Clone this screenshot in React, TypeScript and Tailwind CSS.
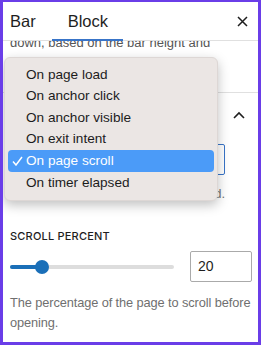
import React from "react";

const items = [
  "On page load",
  "On anchor click",
  "On anchor visible",
  "On exit intent",
  "On page scroll",
  "On timer elapsed",
];

const sans = { fontFamily: "'Liberation Sans', Arial, sans-serif" };

export default function App() {
  return (
    <div
      className="relative w-[261px] h-[345px] overflow-hidden bg-white border-[3px] border-t-2 border-[#6a3de8]"
      style={sans}
    >
      {/* Header */}
      <div className="relative flex items-center h-[39px] border-b border-[#e0e0e0] pl-[7px] pr-[8px]">
        <div className="text-[16.5px] text-[#1e1e1e]">Bar</div>
        <div className="relative ml-[16px] text-[16.5px] text-[#1e1e1e] h-full flex items-center pl-[16px] pr-[15px]">
          Block
          <div className="absolute left-0 right-0 bottom-[-1px] h-[2px] bg-[#3874c8]" />
        </div>
        <div className="ml-auto text-[#1e1e1e] mr-[1px]">
          <svg width="13" height="13" viewBox="0 0 13 13">
            <path d="M2 2 L11 11 M11 2 L2 11" stroke="#1e1e1e" strokeWidth="1.5" />
          </svg>
        </div>
      </div>

      {/* scrolled content */}
      <div className="overflow-hidden">
        <div className="-mt-[8px] pl-[7px] pr-[8px] text-[13px] leading-[20px] text-[#555]">
          <div>down, based on the bar height and</div>
          <div>position.</div>
        </div>
        <div className="mt-[19px] border-t border-[#e0e0e0]" />
        <div className="flex items-center justify-between h-[44px] pl-[7px] pr-[12px]">
          <div className="text-[13px] font-medium text-[#1e1e1e]">Trigger</div>
          <svg width="14" height="10" viewBox="0 0 14 10">
            <path d="M2 8 L7 3 L12 8" stroke="#1e1e1e" strokeWidth="1.6" fill="none" />
          </svg>
        </div>
        <div className="pl-[7px] mt-[7px]">
          <div className="w-[215px] h-[31px] border border-[#3874c8] rounded-[2px]" />
          <div className="mt-[10px] w-[215px] text-[13px] text-[#757575] leading-[18px] text-right">
            When to open the bar and load.
          </div>
        </div>

        <div className="mt-[25px] pl-[7px] pr-[3px]">
          <div
            className="text-[11px] leading-[16px] font-medium uppercase text-[#1e1e1e] tracking-[0.2px]"
            style={{ fontFamily: "Inter, sans-serif" }}
          >
            Scroll percent
          </div>
          <div className="flex items-center mt-[7px] pr-[3px]">
            <div className="relative flex-1 h-[4px] bg-[#ddd] rounded-full mr-[16px]">
              <div className="absolute left-0 top-0 h-[4px] w-[32px] bg-[#1a6fb8] rounded-full" />
              <div className="absolute left-[25px] top-[-5px] w-[14px] h-[14px] rounded-full bg-[#1a6fb8]" />
            </div>
            <div className="w-[62px] h-[31px] border border-[#aaa] rounded-[2px] flex items-center pl-[7px] text-[14px] text-[#1e1e1e]">
              20
            </div>
          </div>
          <div className="mt-[11px] text-[12.8px] leading-[20px] text-[#6f6f6f] tracking-[-0.1px]">
            The percentage of the page to scroll before opening.
          </div>
        </div>
      </div>

      {/* Dropdown menu */}
      <div
        className="absolute left-[1px] top-[55px] w-[214px] bg-[#ebe6e4] rounded-[6px] py-[6px] px-[3px] shadow-[0_4px_12px_rgba(0,0,0,0.25)] border border-[#ddd7d5]"
        style={sans}
      >
        {items.map((it) => {
          const sel = it === "On page scroll";
          return (
            <div
              key={it}
              className={
                "relative flex items-center h-[21.6px] rounded-[4px] pl-[18px] text-[13.6px] " +
                (sel ? "bg-[#4b9bf8] text-white" : "text-[#1c1c1c]")
              }
            >
              {sel && (
                <svg
                  className="absolute left-[4px] top-[6px]"
                  width="11"
                  height="10"
                  viewBox="0 0 11 10"
                >
                  <path d="M1 5.5 L4 9 L10 1" stroke="white" strokeWidth="1.5" fill="none" />
                </svg>
              )}
              {it}
            </div>
          );
        })}
      </div>
    </div>
  );
}
